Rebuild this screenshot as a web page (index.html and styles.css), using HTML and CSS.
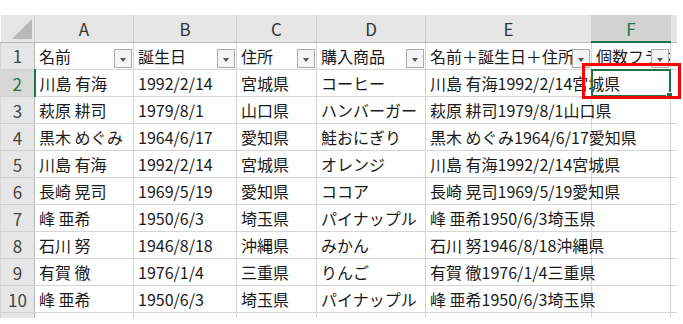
FILE: index.html
```html
<!DOCTYPE html>
<html lang="ja">
<head>
    <meta charset="UTF-8">
    <title>Sheet</title>
    <link rel="stylesheet" href="styles.css">
</head>
<body>
    <div class="sheet">
        <table class="grid">
            <colgroup>
                <col class="w-rh"><col class="w-a"><col class="w-b"><col class="w-c">
                <col class="w-d"><col class="w-e"><col class="w-f"><col class="w-g">
            </colgroup>
            <thead>
                <tr>
                    <th class="corner"><span class="tri"></span></th>
                    <th>A</th><th>B</th><th>C</th><th>D</th><th>E</th>
                    <th class="sel">F</th><th class="stub"></th>
                </tr>
            </thead>
            <tbody>
                <tr>
                    <td class="rh">1</td>
                    <td class="hd">名前<span class="dd"></span></td>
                    <td class="hd">誕生日<span class="dd"></span></td>
                    <td class="hd">住所<span class="dd"></span></td>
                    <td class="hd">購入商品<span class="dd"></span></td>
                    <td class="hd">名前＋誕生日＋住所<span class="dd"></span></td>
                    <td class="hd">個数フラグ<span class="dd"></span></td>
                    <td class="stub"></td>
                </tr>
                <tr>
                    <td class="rh rh-sel">2</td>
                    <td>川島 有海</td><td>1992/2/14</td><td>宮城県</td><td>コーヒー</td>
                    <td class="spill">川島 有海1992/2/14宮城県</td>
                    <td class="active"><span class="callout"></span></td>
                    <td class="stub"></td>
                </tr>
                <tr>
                    <td class="rh">3</td>
                    <td>萩原 耕司</td><td>1979/8/1</td><td>山口県</td><td>ハンバーガー</td>
                    <td class="spill">萩原 耕司1979/8/1山口県</td><td></td><td class="stub"></td>
                </tr>
                <tr>
                    <td class="rh">4</td>
                    <td>黒木 めぐみ</td><td>1964/6/17</td><td>愛知県</td><td>鮭おにぎり</td>
                    <td class="spill">黒木 めぐみ1964/6/17愛知県</td><td></td><td class="stub"></td>
                </tr>
                <tr>
                    <td class="rh">5</td>
                    <td>川島 有海</td><td>1992/2/14</td><td>宮城県</td><td>オレンジ</td>
                    <td class="spill">川島 有海1992/2/14宮城県</td><td></td><td class="stub"></td>
                </tr>
                <tr>
                    <td class="rh">6</td>
                    <td>長崎 晃司</td><td>1969/5/19</td><td>愛知県</td><td>ココア</td>
                    <td class="spill">長崎 晃司1969/5/19愛知県</td><td></td><td class="stub"></td>
                </tr>
                <tr>
                    <td class="rh">7</td>
                    <td>峰 亜希</td><td>1950/6/3</td><td>埼玉県</td><td>パイナップル</td>
                    <td class="spill">峰 亜希1950/6/3埼玉県</td><td></td><td class="stub"></td>
                </tr>
                <tr>
                    <td class="rh">8</td>
                    <td>石川 努</td><td>1946/8/18</td><td>沖縄県</td><td>みかん</td>
                    <td class="spill">石川 努1946/8/18沖縄県</td><td></td><td class="stub"></td>
                </tr>
                <tr>
                    <td class="rh">9</td>
                    <td>有賀 徹</td><td>1976/1/4</td><td>三重県</td><td>りんご</td>
                    <td class="spill">有賀 徹1976/1/4三重県</td><td></td><td class="stub"></td>
                </tr>
                <tr>
                    <td class="rh">10</td>
                    <td>峰 亜希</td><td>1950/6/3</td><td>埼玉県</td><td>パイナップル</td>
                    <td class="spill">峰 亜希1950/6/3埼玉県</td><td></td><td class="stub"></td>
                </tr>
                <tr class="part">
                    <td class="rh"></td>
                    <td></td><td></td><td></td><td></td><td></td><td></td><td class="stub"></td>
                </tr>
            </tbody>
        </table>
    </div>
</body>
</html>
```

FILE: styles.css
```css
body {
    margin: 0;
    background: #ffffff;
    font-family: "Noto Sans CJK JP", "Noto Sans", sans-serif;
}
.sheet {
    padding-top: 15px;
}
.grid {
    border-collapse: collapse;
    table-layout: fixed;
    width: 676px;
    font-size: 16px;
    color: #1a1a1a;
}
.w-rh { width: 34px; }
.w-a { width: 99px; }
.w-b { width: 103px; }
.w-c { width: 80px; }
.w-d { width: 109px; }
.w-e { width: 166px; }
.w-f { width: 79px; }
.w-g { width: 6px; }

th {
    height: 26px;
    padding: 0;
    background: #e6e6e6;
    border-right: 1px solid #cfcfcf;
    border-bottom: 1px solid #b9b9b9;
    font-weight: normal;
    color: #333333;
    font-size: 17px;
}
th.sel {
    background: #d2d2d2;
    color: #217346;
    border-bottom: 2px solid #217346;
}
th.stub {
    border-right: none;
}
.corner {
    position: relative;
}
.tri {
    position: absolute;
    right: 2px;
    bottom: 3px;
    width: 0;
    height: 0;
    border-left: 20px solid transparent;
    border-bottom: 20px solid #b8b8b8;
}

td {
    height: 26px;
    padding: 0 0 0 4px;
    border: 1px solid #d6d6d6;
    white-space: nowrap;
    overflow: visible;
    vertical-align: middle;
}
td.rh {
    padding: 0;
    background: #e6e6e6;
    border-right: 1px solid #b9b9b9;
    border-bottom-color: #d0d0d0;
    text-align: center;
    color: #444444;
    font-size: 17px;
}
td.rh-sel {
    background: #d8d8d8;
    color: #217346;
    border-right: 2px solid #217346;
}
td.hd {
    position: relative;
    overflow: hidden;
}
td.spill {
    border-right: none;
}
td.stub {
    padding: 0;
    border-right: none;
}
.part td {
    height: 5px;
    border-bottom: none;
}

.dd {
    position: absolute;
    right: 1px;
    top: 6px;
    width: 16px;
    height: 17px;
    border: 1px solid #acacac;
    background: #f4f4f4;
}
.dd::after {
    content: "";
    position: absolute;
    left: 5px;
    top: 8px;
    border-top: 4px solid #555555;
    border-left: 3px solid transparent;
    border-right: 3px solid transparent;
}

.active {
    position: relative;
}
.active::after {
    content: "";
    position: absolute;
    left: -1px;
    top: -1px;
    right: -1px;
    bottom: -1px;
    border: 2px solid #217346;
}
.active::before {
    content: "";
    position: absolute;
    right: -3px;
    bottom: -3px;
    width: 5px;
    height: 5px;
    background: #217346;
    border: 1px solid #ffffff;
    z-index: 2;
}
.callout {
    position: absolute;
    left: -10px;
    top: -7px;
    right: -11px;
    bottom: -3px;
    border: 3px solid #ff0000;
    z-index: 3;
}
```
